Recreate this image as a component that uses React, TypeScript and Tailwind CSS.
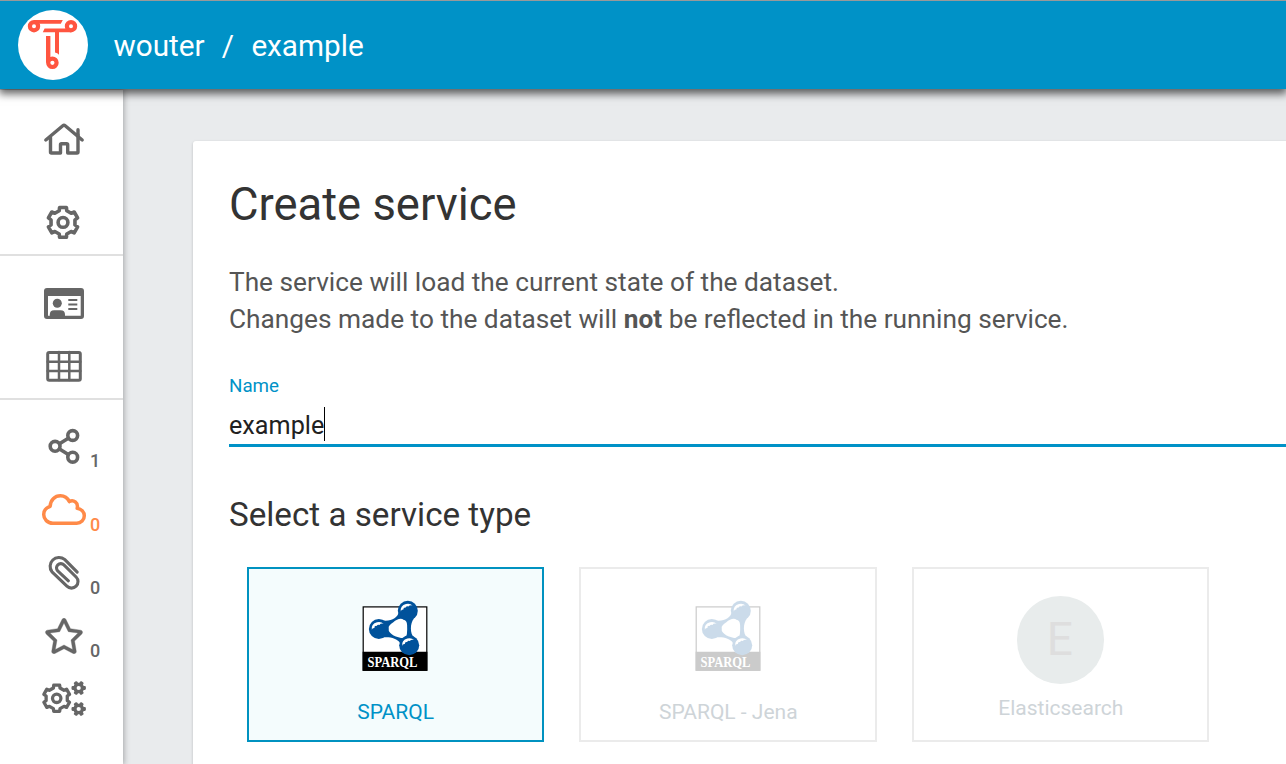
import type { ReactNode } from "react";
import { FaRegStar } from "react-icons/fa";

function gearPath(cx: number, cy: number, tip: number, root: number, half: number, turn = 0) {
  const points: string[] = [];
  for (let i = 0; i < 6; i++) {
    const a = ((i * 60 + turn) * Math.PI) / 180;
    const put = (x: number, y: number) => {
      const px = cx + x * Math.cos(a) - y * Math.sin(a);
      const py = cy + x * Math.sin(a) + y * Math.cos(a);
      points.push(`${px.toFixed(2)} ${py.toFixed(2)}`);
    };
    put(-half, -root);
    put(-half * 0.9, -tip);
    put(half * 0.9, -tip);
    put(half, -root);
  }
  return `M${points.join("L")}Z`;
}

function Icon({ children, width = 3.4 }: { children: ReactNode; width?: number }) {
  return (
    <svg
      className="size-12 shrink-0"
      viewBox="0 0 48 48"
      fill="none"
      stroke="currentColor"
      strokeWidth={width}
      strokeLinecap="round"
      strokeLinejoin="round"
    >
      {children}
    </svg>
  );
}

const HomeIcon = () => (
  <Icon>
    <path d="M5.8 25 22.8 10.8q1.2-1 2.4 0L42.2 25M38 14.8V20" />
    <path d="M10.5 22.5V37q0 1 1 1H20.5V29.8q0-1 1-1h5.2q1 0 1 1V38H37q1 0 1-1V20" />
  </Icon>
);

const GearIcon = () => (
  <Icon width={3.6}>
    <path d={gearPath(23, 24.4, 14.9, 11.6, 3.8)} />
    <circle cx="23" cy="24.4" r="4.9" />
  </Icon>
);

const CardIcon = () => (
  <Icon width={0}>
    <path
      fill="currentColor"
      fillRule="evenodd"
      d="M7 9H41q3 0 3 3V37q0 3-3 3H7q-3 0-3-3V12q0-3 3-3ZM8 17V36.8H40.7V17Z"
    />
    <circle cx="17.3" cy="24.3" r="4.5" fill="currentColor" />
    <path fill="currentColor" d="M9.8 38V35.5q0-4.3 4.3-4.3h6.4q4.5 0 4.5 4.3V38Z" />
    <path strokeWidth="2" strokeLinecap="butt" d="M28.3 21H37.3M28.3 25.5H37.3M28.3 30H37.3" />
  </Icon>
);

const GridIcon = () => (
  <Icon width={3}>
    <rect x="7.7" y="10.4" width="32.6" height="27.9" rx="1.5" />
    <path strokeWidth="2.5" d="M19 10V38M29.3 10V38M7.7 19.7H40.3M7.7 28.9H40.3" />
  </Icon>
);

const ShareIcon = () => (
  <Icon width={3.6}>
    <circle cx="15.1" cy="24.3" r="4.9" />
    <circle cx="32.7" cy="13.5" r="4.9" />
    <circle cx="32.7" cy="35.2" r="4.9" />
    <path d="M19.5 21.7 28.3 16.2M19.5 27 28.3 32.5" />
  </Icon>
);

const CloudIcon = () => (
  <Icon width={3.5}>
    <path d="M12.8 37.2C7.5 37.2 3.7 33.2 3.7 28.6C3.7 24.8 6.2 21.6 10.2 20.3C10.4 14.2 14.8 9.8 20.4 9.8C24.3 9.8 27.6 12 29.3 15.6C33.4 13.2 38.6 16.6 37.2 22.2C41.6 23 44.3 26.2 44.3 29.7C44.3 34 41 37.2 36.7 37.2Z" />
  </Icon>
);

const ClipIcon = () => (
  <Icon width={3.1}>
    <path d="M37.2 23.1 24.6 10.4A8.9 8.9 0 0 0 12 22.8L26.9 37.2A6.5 6.5 0 0 0 36.1 28L23.9 15.9A4.3 4.3 0 0 0 17.7 21.9L28.4 31.8" />
  </Icon>
);

const StarIcon = () => (
  <span className="flex size-12 shrink-0 items-center justify-center">
    <FaRegStar className="h-[36px] w-[40px]" stroke="currentColor" strokeWidth="5" />
  </span>
);

const GearsIcon = () => (
  <Icon width={3.3}>
    <path d={gearPath(16.7, 24.3, 13.1, 10.3, 3.3)} />
    <circle cx="16.7" cy="24.3" r="4.2" />
    {[14, 35].map((y) => (
      <g key={y} strokeWidth="2.4">
        <path d={gearPath(38.7, y, 6, 4.3, 0.9, 30)} />
        <circle cx="38.7" cy={y} r="3.5" strokeWidth="2.8" />
      </g>
    ))}
  </Icon>
);

function NavItem({
  icon,
  count,
  className,
}: {
  icon: ReactNode;
  count?: number;
  className?: string;
}) {
  return (
    <div className={`flex h-12 shrink-0 items-start pl-10 ${className ?? ""}`}>
      {icon}
      {count !== undefined && (
        <span className="ml-0.5 mt-[27px] text-[18px] font-medium leading-[23px]">{count}</span>
      )}
    </div>
  );
}

function TLogo() {
  return (
    <svg className="size-[70px] shrink-0 rounded-full bg-white" viewBox="0 0 70 70" fill="#ff5540">
      <path d="M16 10H44.8L42.8 13.8H16ZM26.6 18.6H53V22.3H41V44.8Q39.5 42.8 37 42.6V22.3H24.8ZM28 26H32.4V50L28 53Z" />
      <g fill="#fff" stroke="#ff5540" strokeWidth="4.2">
        <circle cx="16" cy="16.2" r="4.1" />
        <circle cx="53" cy="16.2" r="4.1" />
        <circle cx="34.4" cy="52.8" r="4.2" />
      </g>
    </svg>
  );
}

function SparqlLogo({ className }: { className?: string }) {
  return (
    <svg className={`h-[72px] w-[66px] ${className ?? ""}`} viewBox="0 0 66 72">
      <rect x="1.2" y="6.9" width="63.6" height="63.4" fill="#fff" stroke="#000" strokeWidth="1.2" />
      <path d="M.6 51.8H65.4V70.8H.6Z" />
      <path
        fill="#00529b"
        fillRule="evenodd"
        d="M36.6 13C35.5 17 30 21.5 21 20.5L20 37.6C27 36.5 35 38 38 43L52 37.5C48 34 47.8 23 52 18.5ZM26.3 28.8C26.3 25.8 28.5 24.4 31 22.5C34.5 19.5 37 18.4 40 18.9C43.6 19.6 45 21.5 45.1 25C45.3 28 45.2 31 44.9 34C44.5 37.4 42.5 38.3 39 37.9C35.5 37.4 32 36 29.5 34C27.5 32.4 26.3 31 26.3 28.8Z"
      />
      <g fill="#00529b">
        <circle cx="45.8" cy="10.8" r="10" />
        <circle cx="16.8" cy="29" r="9.9" />
        <circle cx="47.2" cy="45.2" r="10" />
      </g>
      <g fill="#fff">
        <path d="M38.8 11.5Q38 5.5 44 4Q48.1 3.2 50.6 5.4Q47.6 4.8 46.4 6.6Q44.4 5.8 43.8 7.6Q41.2 7.2 41.4 9.6Q39.2 9.4 38.8 11.5Z" />
        <path d="M9.8 29.8Q9 23.8 15 22.3Q19.2 21.5 21.6 23.7Q18.6 23.1 17.4 24.9Q15.4 24.1 14.8 25.9Q12.2 25.5 12.4 27.9Q10.2 27.7 9.8 29.8Z" />
        <path d="M40.2 46Q39.4 40 45.4 38.5Q49.6 37.7 52 39.9Q49 39.3 47.8 41.1Q45.8 40.3 45.2 42.1Q42.6 41.7 42.8 44.1Q40.6 43.9 40.2 46Z" />
      </g>
      <text
        x="5.5"
        y="67.2"
        fill="#fff"
        textLength="50"
        lengthAdjust="spacingAndGlyphs"
        className="font-['Liberation_Serif',serif] text-[14.5px] font-bold"
      >
        SPARQL
      </text>
    </svg>
  );
}

export default function App() {
  return (
    <div className="flex h-[764px] w-[1286px] flex-col overflow-hidden bg-[#e9ebed] font-[Roboto,sans-serif]">
      <header className="z-20 flex h-[89px] shrink-0 items-start border-t border-[#999] bg-[#0092c7] pl-[18px] pt-[9px] text-[29.7px] leading-[72px] text-white shadow-[0_4px_8px_1px_rgba(0,0,0,0.6)]">
        <TLogo />
        <span className="ml-[25.5px]">wouter</span>
        <span className="ml-[17px]">/</span>
        <span className="ml-[17.5px]">example</span>
      </header>
      <div className="flex min-h-0 flex-1 pt-px">
        <nav className="z-10 flex w-[123px] shrink-0 flex-col bg-white text-[#666] shadow-[0_0_6px_1px_rgba(0,0,0,0.3)]">
          <NavItem className="mt-[25px]" icon={<HomeIcon />} />
          <NavItem className="mt-[35px]" icon={<GearIcon />} />
          <div className="mt-2 h-0.5 shrink-0 bg-[#e0e0e0]" />
          <NavItem className="mt-[23px]" icon={<CardIcon />} />
          <NavItem className="mt-[15px]" icon={<GridIcon />} />
          <div className="mt-2 h-0.5 shrink-0 bg-[#e0e0e0]" />
          <NavItem className="mt-[22px]" icon={<ShareIcon />} count={1} />
          <NavItem className="mt-4 text-[#ff8a48]" icon={<CloudIcon />} count={0} />
          <NavItem className="mt-[15px]" icon={<ClipIcon />} count={0} />
          <NavItem className="mt-[15px]" icon={<StarIcon />} count={0} />
          <NavItem className="mt-[14px]" icon={<GearsIcon />} />
        </nav>
        <main className="min-w-0 flex-1 pl-[70px] pt-[51px]">
          <section className="h-[700px] w-[1200px] rounded-[3px] bg-white pl-9 pt-9 shadow-[0_1px_3px_rgba(0,0,0,0.2)]">
            <h1 className="text-[45.4px] leading-[55px] text-[#333]">Create service</h1>
            <p className="mt-8 text-[26.25px] leading-[37px] text-[#555]">
              The service will load the current state of the dataset.
              <br />
              Changes made to the dataset will <b>not</b> be reflected in the running service.
            </p>
            <div className="mt-9 border-b-3 border-[#0092c7]">
              <div className="text-[18.8px] leading-6 text-[#0092c7]">Name</div>
              <div className="mt-[9px] flex h-[37px] items-start text-[25.2px] leading-[38px] text-[#212121]">
                example
                <span className="h-[34px] w-px bg-black" />
              </div>
            </div>
            <h2 className="mt-12 text-[33.2px] leading-10 text-[#333]">Select a service type</h2>
            <div className="ml-[18px] mt-8 flex gap-[35px] text-[21px] leading-6">
              <div className="flex h-[175px] w-[297.3px] flex-col items-center border-2 border-[#0092c0] bg-[#f4fcfd] text-[#0092c7]">
                <SparqlLogo className="mr-[1.3px] mt-[31px]" />
                <span className="mt-7">SPARQL</span>
              </div>
              <div className="flex h-[175px] w-[298px] flex-col items-center border-2 border-[#ebebeb] text-[#ced4d8]">
                <SparqlLogo className="mt-[31px] opacity-20" />
                <span className="mt-7">SPARQL - Jena</span>
              </div>
              <div className="flex h-[175px] w-[297px] flex-col items-center border-2 border-[#ebebeb] text-[#ced4d8]">
                <div className="mt-[27px] flex h-[88px] w-[87px] items-center justify-center rounded-full bg-[#e8ecec] pb-0.5 pr-0.5 text-[46px] leading-none text-[#dedede]">
                  E
                </div>
                <span className="mt-[11.5px]">Elasticsearch</span>
              </div>
            </div>
          </section>
        </main>
      </div>
    </div>
  );
}
